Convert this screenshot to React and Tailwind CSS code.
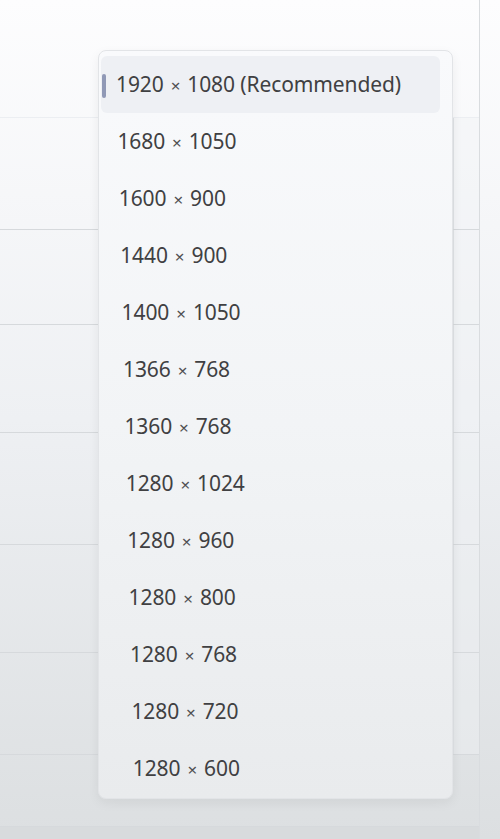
import React from 'react';

const resolutions = [
  ['1920', '1080', ' (Recommended)'],
  ['1680', '1050'],
  ['1600', '900'],
  ['1440', '900'],
  ['1400', '1050'],
  ['1366', '768'],
  ['1360', '768'],
  ['1280', '1024'],
  ['1280', '960'],
  ['1280', '800'],
  ['1280', '768'],
  ['1280', '720'],
  ['1280', '600'],
];

// Heights of the settings rows sitting behind the open dropdown
const settingRows = [118, 112, 95, 108, 112, 108, 102, 72];

export default function App() {
  const selected = 0;

  return (
    <div
      className="relative w-[500px] h-[839px] overflow-hidden bg-gradient-to-b from-[#fdfdfe] via-[#eef0f3] to-[#dcdfe1]"
      style={{ fontFamily: '"Noto Sans", "Open Sans", sans-serif' }}
    >
      {/* Settings page underneath */}
      <div className="flex flex-col w-[480px] border-r border-[#d9dcdf]">
        {settingRows.map((h, i) => (
          <div
            key={i}
            className={`flex border-b ${i === 0 ? 'border-[#eceef2]' : 'border-[#d6d9dc]'}`}
            style={{ height: h }}
          >
            <div className="flex-1" />
            {i > 0 && i < 7 && (
              <div className="w-[26px] border-l border-[#dfe2e5] bg-[#f1f3f5]/40" />
            )}
          </div>
        ))}
        <div className="h-[20px] bg-[#d8dbdd]" />
      </div>

      {/* Resolution dropdown */}
      <div className="absolute left-[98px] top-[50px] w-[355px] pt-[5px] pb-[1px] rounded-lg border border-[#e2e4e7] bg-gradient-to-b from-[#f9fafc] via-[#f2f4f6] to-[#e9ebed] shadow-[0_4px_12px_rgba(0,0,0,0.06)]">
        {resolutions.map(([w, h, note], i) => (
          <div key={w + h} className="h-[57px] flex">
            <div
              className={`relative flex flex-1 items-center ml-[2px] mr-[12px] rounded-md ${
                i === selected ? 'bg-[#eef0f4]' : ''
              }`}
              style={{ paddingLeft: 15 + i * 1.4 }}
            >
              {i === selected && (
                <span className="absolute left-[1px] top-[18px] h-[24px] w-[4px] rounded-full bg-[#9099b6]" />
              )}
              <span className="text-[21px] leading-none text-[#404042] tracking-[-0.1px] whitespace-pre">
                {w}
                <span className="text-[17px] px-[7px] text-[#505052]">×</span>
                {h}
                {note}
              </span>
            </div>
          </div>
        ))}
      </div>
    </div>
  );
}
